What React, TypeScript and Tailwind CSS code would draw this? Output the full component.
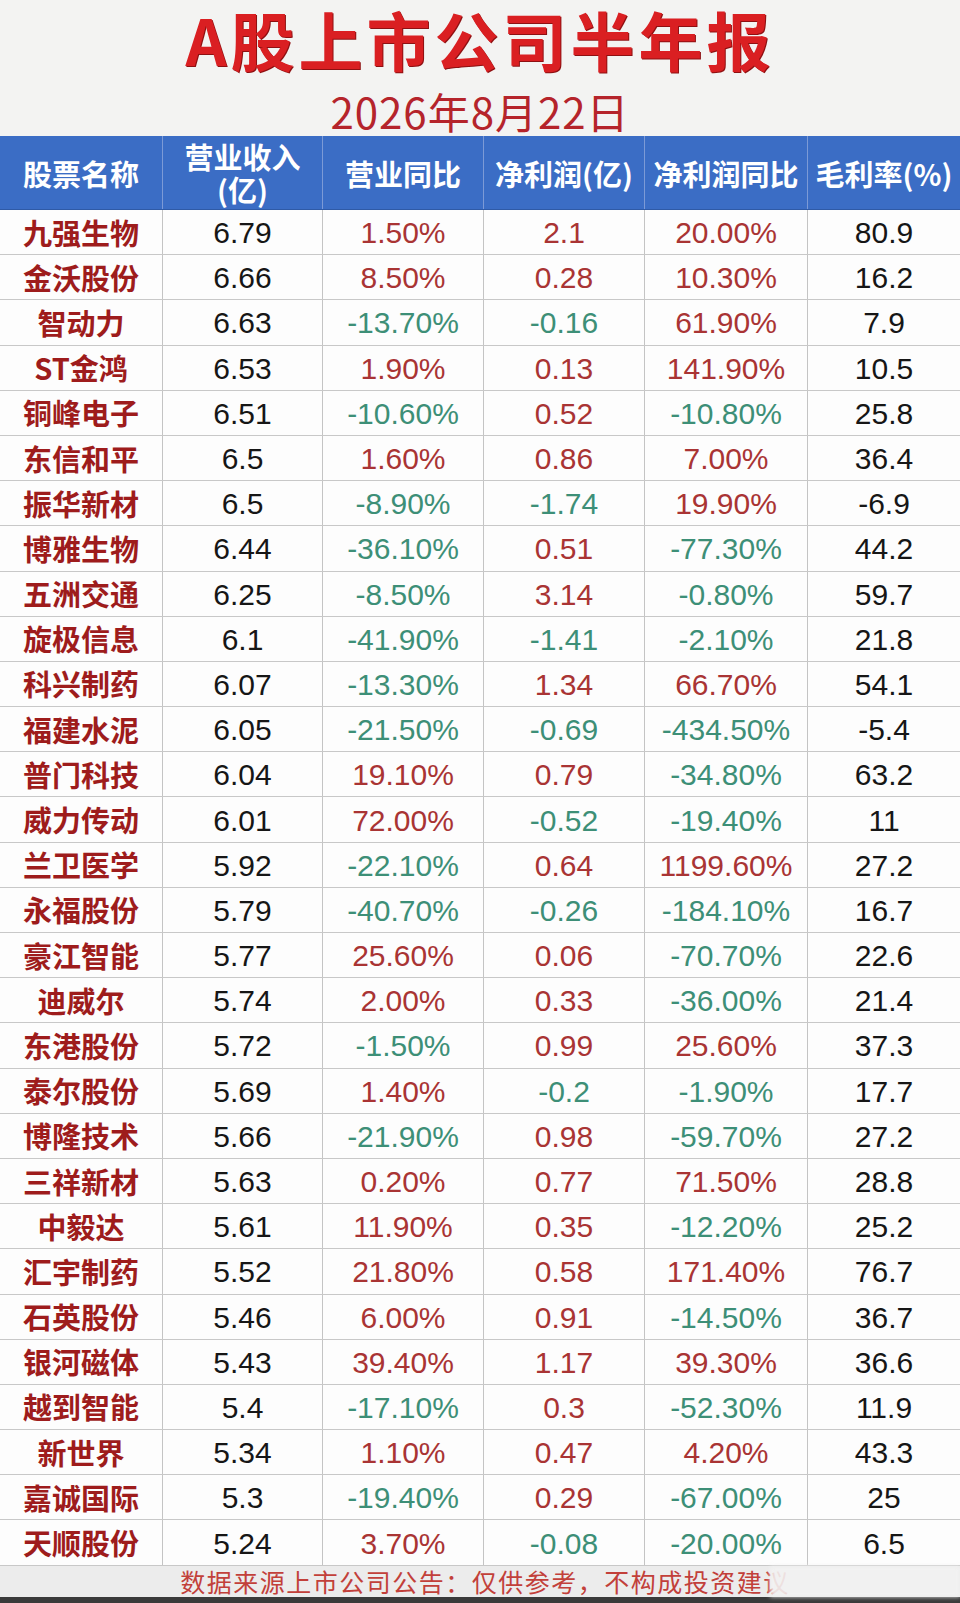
import React from "react";

type Row = [string, string, string, string, string, string];

const rows: Row[] = [
  ["九强生物", "6.79", "1.50%", "2.1", "20.00%", "80.9"],
  ["金沃股份", "6.66", "8.50%", "0.28", "10.30%", "16.2"],
  ["智动力", "6.63", "-13.70%", "-0.16", "61.90%", "7.9"],
  ["ST金鸿", "6.53", "1.90%", "0.13", "141.90%", "10.5"],
  ["铜峰电子", "6.51", "-10.60%", "0.52", "-10.80%", "25.8"],
  ["东信和平", "6.5", "1.60%", "0.86", "7.00%", "36.4"],
  ["振华新材", "6.5", "-8.90%", "-1.74", "19.90%", "-6.9"],
  ["博雅生物", "6.44", "-36.10%", "0.51", "-77.30%", "44.2"],
  ["五洲交通", "6.25", "-8.50%", "3.14", "-0.80%", "59.7"],
  ["旋极信息", "6.1", "-41.90%", "-1.41", "-2.10%", "21.8"],
  ["科兴制药", "6.07", "-13.30%", "1.34", "66.70%", "54.1"],
  ["福建水泥", "6.05", "-21.50%", "-0.69", "-434.50%", "-5.4"],
  ["普门科技", "6.04", "19.10%", "0.79", "-34.80%", "63.2"],
  ["威力传动", "6.01", "72.00%", "-0.52", "-19.40%", "11"],
  ["兰卫医学", "5.92", "-22.10%", "0.64", "1199.60%", "27.2"],
  ["永福股份", "5.79", "-40.70%", "-0.26", "-184.10%", "16.7"],
  ["豪江智能", "5.77", "25.60%", "0.06", "-70.70%", "22.6"],
  ["迪威尔", "5.74", "2.00%", "0.33", "-36.00%", "21.4"],
  ["东港股份", "5.72", "-1.50%", "0.99", "25.60%", "37.3"],
  ["泰尔股份", "5.69", "1.40%", "-0.2", "-1.90%", "17.7"],
  ["博隆技术", "5.66", "-21.90%", "0.98", "-59.70%", "27.2"],
  ["三祥新材", "5.63", "0.20%", "0.77", "71.50%", "28.8"],
  ["中毅达", "5.61", "11.90%", "0.35", "-12.20%", "25.2"],
  ["汇宇制药", "5.52", "21.80%", "0.58", "171.40%", "76.7"],
  ["石英股份", "5.46", "6.00%", "0.91", "-14.50%", "36.7"],
  ["银河磁体", "5.43", "39.40%", "1.17", "39.30%", "36.6"],
  ["越到智能", "5.4", "-17.10%", "0.3", "-52.30%", "11.9"],
  ["新世界", "5.34", "1.10%", "0.47", "4.20%", "43.3"],
  ["嘉诚国际", "5.3", "-19.40%", "0.29", "-67.00%", "25"],
  ["天顺股份", "5.24", "3.70%", "-0.08", "-20.00%", "6.5"],
];

const widths = ["w-[163px]", "w-[160px]", "w-[161px]", "w-[161px]", "w-[163px]", "w-[152px]"];

const cjk = { fontFamily: '"Noto Sans CJK SC", "Noto Sans", sans-serif' };
const num = { fontFamily: '"Liberation Sans", Arial, sans-serif' };

function signColor(v: string) {
  return v.startsWith("-") ? "text-[#3d8f77]" : "text-[#a93434]";
}

function HeaderCell({ i, children, two }: { i: number; children: React.ReactNode; two?: boolean }) {
  return (
    <div
      className={`${widths[i]} shrink-0 flex justify-center text-white font-bold text-[29px] text-center ${
        two ? "items-start pt-[4px] leading-[33px]" : "items-center leading-none pt-[2px]"
      } ${i < 5 ? "border-r border-[#7c9ad6]" : ""}`}
    >
      {children}
    </div>
  );
}

function DataRow({ r }: { r: Row }) {
  const colors = ["", "text-[#161616]", signColor(r[2]), signColor(r[3]), signColor(r[4]), "text-[#161616]"];
  return (
    <div className="flex h-[45.2px] border-b border-[#c8c8c8] bg-[#fdfdfd]">
      {r.map((v, i) => (
        <div
          key={i}
          className={`${widths[i]} shrink-0 flex items-center justify-center ${i < 5 ? "border-r border-[#c4c4c4]" : ""}`}
        >
          {i === 0 ? (
            <span style={cjk} className="text-[29px] font-bold text-[#9e1c1c] leading-none">
              {v}
            </span>
          ) : (
            <span style={num} className={`text-[30px] leading-none pt-[2px] ${colors[i]}`}>
              {v}
            </span>
          )}
        </div>
      ))}
    </div>
  );
}

export default function App() {
  return (
    <div className="w-[960px] h-[1603px] bg-[#f3f3f2] overflow-hidden flex flex-col" style={cjk}>
      <div className="h-[136px] flex flex-col items-center">
        <h1 className="mt-[2px] text-[64px] leading-[72px] font-bold tracking-[4px] text-[#da1f22] [text-shadow:1px_1px_0_#8e1012]">
          A股上市公司半年报
        </h1>
        <p className="mt-[14px] text-[42px] leading-[46px] tracking-[1px] text-[#b5242b]">
          2026年8月22日
        </p>
      </div>

      <div className="flex h-[74px] bg-[#3b6dc5] border-b border-[#2f5aa6]">
        <HeaderCell i={0}>股票名称</HeaderCell>
        <HeaderCell i={1} two>
          营业收入
          <br />
          (亿)
        </HeaderCell>
        <HeaderCell i={2}>营业同比</HeaderCell>
        <HeaderCell i={3}>净利润(亿)</HeaderCell>
        <HeaderCell i={4}>净利润同比</HeaderCell>
        <HeaderCell i={5}>毛利率(%)</HeaderCell>
      </div>

      <div className="flex flex-col">
        {rows.map((r, i) => (
          <DataRow key={i} r={r} />
        ))}
      </div>

      <div className="relative h-[31px] bg-[#ececec] flex items-center justify-center">
        <span className="text-[25px] leading-none tracking-[1.5px] text-[#c2403a] pl-[10px]">
          数据来源上市公司公告：仅供参考，不构成投资建议
        </span>
        {/* watermark smear */}
        <div className="absolute right-0 top-0 h-full w-[190px] bg-[#f2f2f2]/90 blur-[2px]" />
      </div>
      <div className="flex-1 bg-[#3a3a3a]" />
    </div>
  );
}
